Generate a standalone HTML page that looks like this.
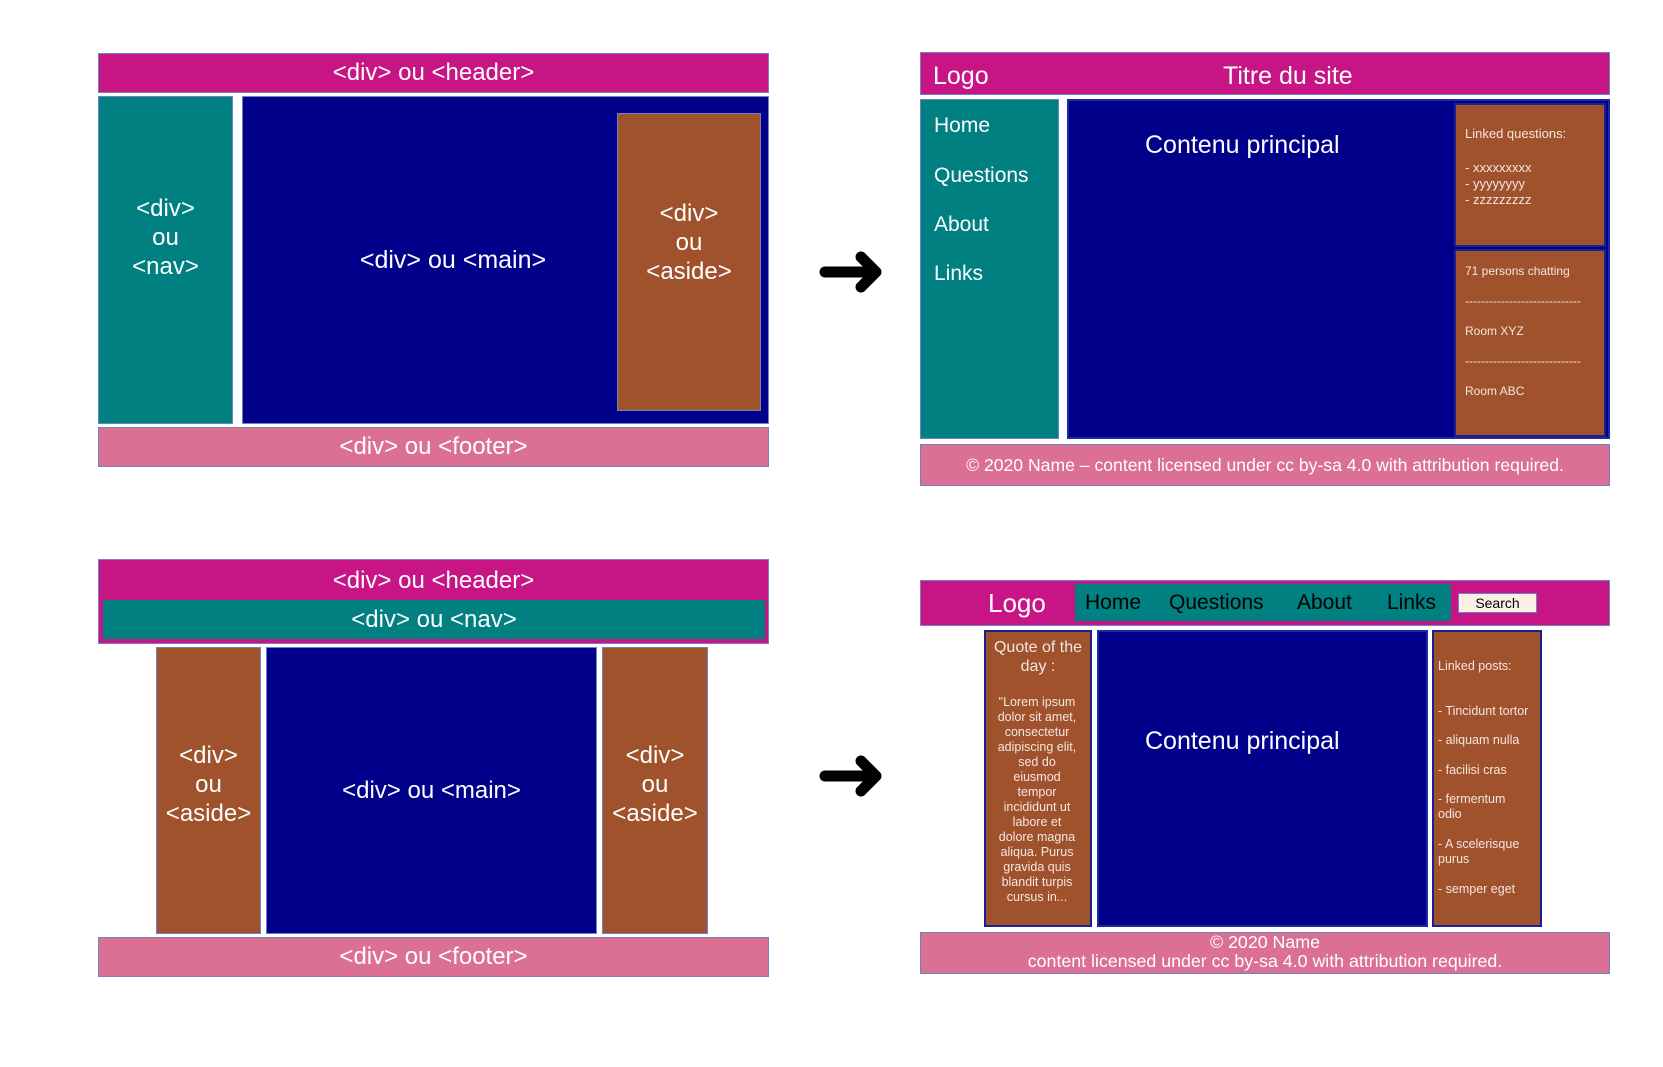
<!DOCTYPE html>
<html><head><meta charset="utf-8"><style>
html,body{margin:0;padding:0;background:#fff;width:1663px;height:1067px;overflow:hidden;position:relative;font-family:"Liberation Sans",sans-serif;color:#fff}
.b{position:absolute;box-sizing:border-box;border:1px solid #6f82c4}
.m{background:#c71585}.t{background:#008080}.n{background:#00008b}.s{background:#a0522d}.p{background:#db7093}
.c{display:flex;align-items:center;justify-content:center;text-align:center}
.tx{position:absolute;white-space:nowrap}
.sm{font-size:13px;color:#f4e6e0}
</style></head><body>

<!-- top-left -->
<div class="b m c" style="left:98px;top:53px;width:671px;height:40px;font-size:24px">&lt;div&gt; ou &lt;header&gt;</div>
<div class="b t c" style="left:98px;top:96px;width:135px;height:328px;font-size:24px;line-height:29px;padding-bottom:46px">&lt;div&gt;<br>ou<br>&lt;nav&gt;</div>
<div class="b n" style="left:242px;top:96px;width:527px;height:328px"></div>
<div class="tx" style="left:242px;width:422px;top:246px;font-size:25px;text-align:center">&lt;div&gt; ou &lt;main&gt;</div>
<div class="b s c" style="left:617px;top:113px;width:144px;height:298px;font-size:24px;line-height:29px;padding-bottom:40px">&lt;div&gt;<br>ou<br>&lt;aside&gt;</div>
<div class="b p c" style="left:98px;top:427px;width:671px;height:40px;font-size:24px">&lt;div&gt; ou &lt;footer&gt;</div>

<!-- arrows -->
<svg style="position:absolute;left:812px;top:245px" width="80" height="55"><path d="M13 27 H64 M49 12 L64 27 L49 42" stroke="#000" stroke-width="11" fill="none" stroke-linecap="round" stroke-linejoin="round"/></svg>
<svg style="position:absolute;left:812px;top:749px" width="80" height="55"><path d="M13 27 H64 M49 12 L64 27 L49 42" stroke="#000" stroke-width="11" fill="none" stroke-linecap="round" stroke-linejoin="round"/></svg>

<!-- top-right -->
<div class="b m" style="left:920px;top:52px;width:690px;height:43px"></div>
<div class="tx" style="left:933px;top:62px;font-size:25px">Logo</div>
<div class="tx" style="left:1223px;top:62px;font-size:25px">Titre du site</div>
<div class="b t" style="left:920px;top:99px;width:139px;height:340px"></div>
<div class="tx" style="left:934px;top:114px;font-size:21px">Home</div>
<div class="tx" style="left:934px;top:164px;font-size:21px">Questions</div>
<div class="tx" style="left:934px;top:213px;font-size:21px">About</div>
<div class="tx" style="left:934px;top:262px;font-size:21px">Links</div>
<div class="b n" style="left:1067px;top:99px;width:543px;height:340px;border:2px solid #1a2aa0"></div>
<div class="tx" style="left:1145px;top:131px;font-size:25px">Contenu principal</div>
<div class="b s" style="left:1454px;top:103px;width:152px;height:144px;border:2px solid #1a2090"></div>
<div class="tx sm" style="left:1465px;top:126px">Linked questions:</div>
<div class="tx sm" style="left:1465px;top:160px;line-height:16px">- xxxxxxxxx<br>- yyyyyyyy<br>- zzzzzzzzz</div>
<div class="b s" style="left:1454px;top:249px;width:152px;height:188px;border:2px solid #1a2090"></div>
<div class="tx" style="left:1465px;top:264px;font-size:12px;color:#f4e6e0">71 persons chatting</div>
<div class="tx" style="left:1465px;top:286px;font-size:12px;color:#f4e6e0;line-height:30px">-----------------------------<br>Room XYZ<br>-----------------------------<br>Room ABC</div>
<div class="b p c" style="left:920px;top:444px;width:690px;height:42px;font-size:17.6px">© 2020 Name – content licensed under cc by-sa 4.0 with attribution required.</div>

<!-- bottom-left -->
<div class="b m" style="left:98px;top:559px;width:671px;height:85px"></div>
<div class="tx" style="left:98px;width:671px;text-align:center;top:567px;font-size:24px">&lt;div&gt; ou &lt;header&gt;</div>
<div class="t c" style="position:absolute;left:103px;top:600px;width:662px;height:39px;font-size:24px">&lt;div&gt; ou &lt;nav&gt;</div>
<div class="b s c" style="left:156px;top:647px;width:105px;height:287px;font-size:24px;line-height:29px;padding-bottom:12px">&lt;div&gt;<br>ou<br>&lt;aside&gt;</div>
<div class="b n c" style="left:266px;top:647px;width:331px;height:287px;font-size:24px">&lt;div&gt; ou &lt;main&gt;</div>
<div class="b s c" style="left:602px;top:647px;width:106px;height:287px;font-size:24px;line-height:29px;padding-bottom:12px">&lt;div&gt;<br>ou<br>&lt;aside&gt;</div>
<div class="b p c" style="left:98px;top:937px;width:671px;height:40px;font-size:24px">&lt;div&gt; ou &lt;footer&gt;</div>

<!-- bottom-right -->
<div class="b m" style="left:920px;top:580px;width:690px;height:46px"></div>
<div class="tx" style="left:988px;top:588px;font-size:26px">Logo</div>
<div class="t" style="position:absolute;left:1075px;top:584px;width:376px;height:37px"></div>
<div class="tx" style="left:1085px;top:591px;font-size:21px;color:#000">Home</div>
<div class="tx" style="left:1169px;top:591px;font-size:21px;color:#000">Questions</div>
<div class="tx" style="left:1297px;top:591px;font-size:21px;color:#000">About</div>
<div class="tx" style="left:1387px;top:591px;font-size:21px;color:#000">Links</div>
<div class="b c" style="left:1458px;top:593px;width:79px;height:20px;background:#faf0e6;color:#000;font-size:14px;border-color:#7080c0">Search</div>
<div class="b s" style="left:984px;top:630px;width:108px;height:297px;border:2px solid #1a2090"></div>
<div class="tx" style="left:984px;width:108px;text-align:center;top:638px;font-size:16px;line-height:19px;color:#f4e6e0;white-space:normal">Quote of the day :</div>
<div class="tx" style="left:994px;width:86px;text-align:center;top:695px;font-size:12.5px;line-height:15px;color:#f4e6e0;white-space:normal">"Lorem ipsum dolor sit amet, consectetur adipiscing elit, sed do eiusmod tempor incididunt ut labore et dolore magna aliqua. Purus gravida quis blandit turpis cursus in...</div>
<div class="b n" style="left:1097px;top:630px;width:331px;height:297px;border:2px solid #1a2aa0"></div>
<div class="tx" style="left:1145px;top:727px;font-size:25px">Contenu principal</div>
<div class="b s" style="left:1432px;top:630px;width:110px;height:297px;border:2px solid #1a2090"></div>
<div class="tx sm" style="left:1438px;top:659px;font-size:12.5px">Linked posts:</div>
<div class="tx sm" style="left:1438px;top:704px;font-size:12.5px">- Tincidunt tortor</div>
<div class="tx sm" style="left:1438px;top:733px;font-size:12.5px">- aliquam nulla</div>
<div class="tx sm" style="left:1438px;top:763px;font-size:12.5px">- facilisi cras</div>
<div class="tx sm" style="left:1438px;top:792px;font-size:12.5px;line-height:15px">- fermentum<br>odio</div>
<div class="tx sm" style="left:1438px;top:837px;font-size:12.5px;line-height:15px">- A scelerisque<br>purus</div>
<div class="tx sm" style="left:1438px;top:882px;font-size:12.5px">- semper eget</div>
<div class="b p c" style="left:920px;top:932px;width:690px;height:42px;font-size:17.8px;line-height:19px;padding-bottom:2px">© 2020 Name<br>content licensed under cc by-sa 4.0 with attribution required.</div>

</body></html>
